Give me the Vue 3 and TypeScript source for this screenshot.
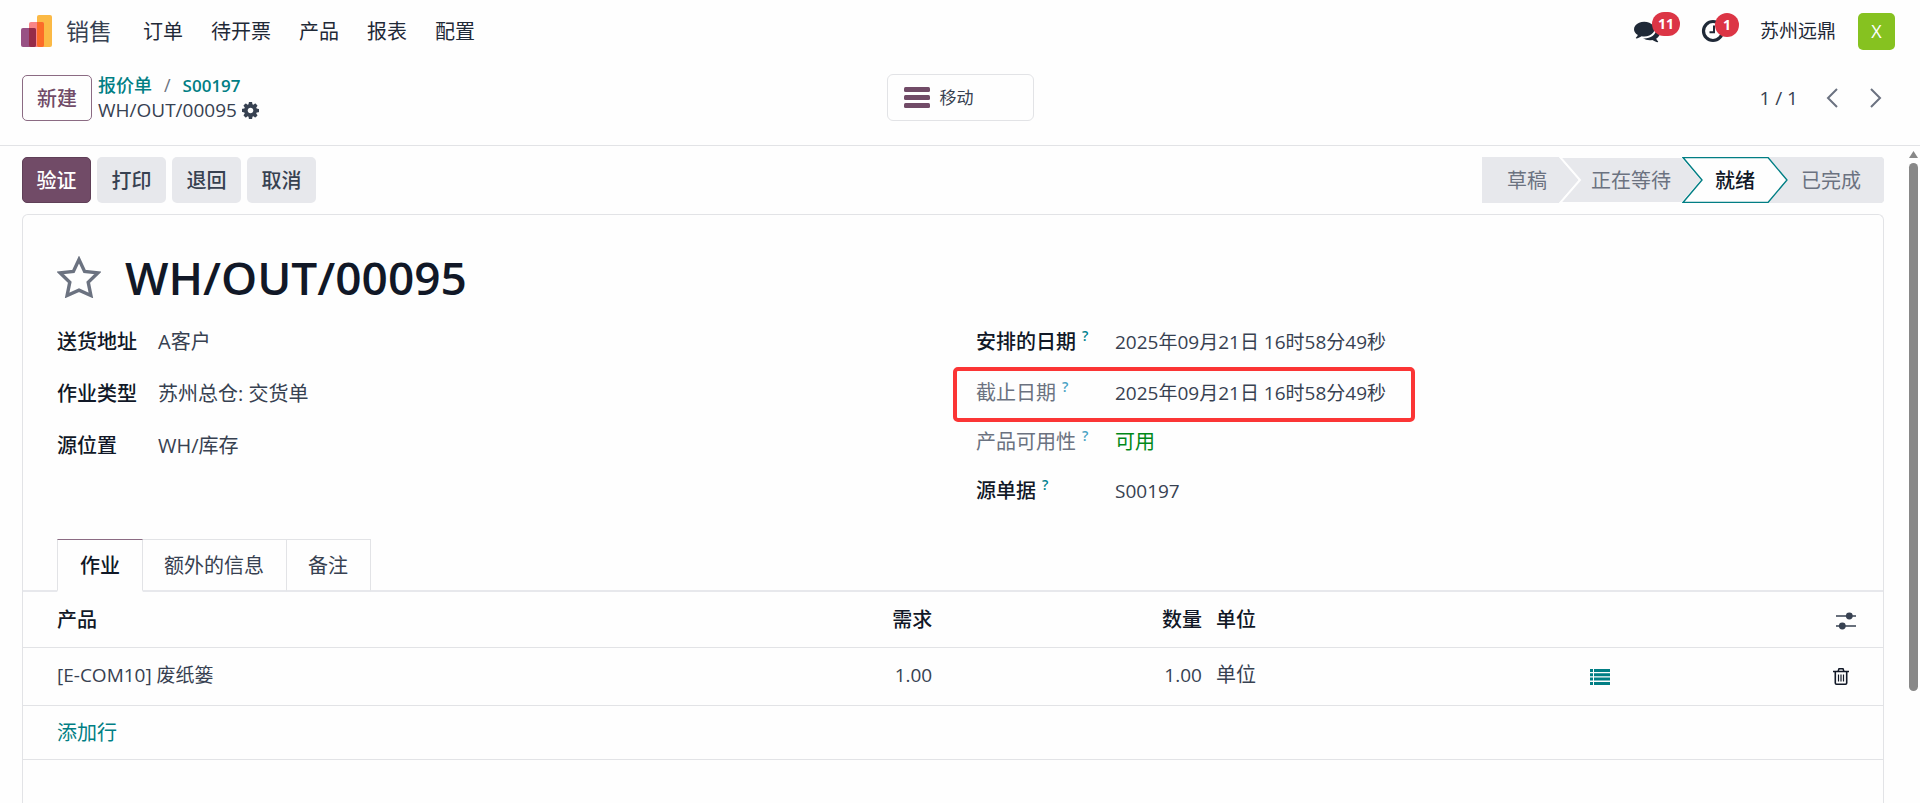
<script setup lang="ts">
import { ref } from 'vue'

interface Field {
  id: string
  label: string
  value: string
  help?: boolean
  muted?: boolean
  success?: boolean
  marked?: boolean
}

interface Stage {
  name: string
  kind: 'first' | 'middle' | 'current' | 'last'
  viewBox: string
  points: string
}

const menus = ['订单', '待开票', '产品', '报表', '配置']
const actions = ['验证', '打印', '退回', '取消']
const tabs = ['作业', '额外的信息', '备注']
const activeTab = ref(0)

const stages: Stage[] = [
  { name: '草稿', kind: 'first', viewBox: '0 0 97 46', points: '0,0 77,0 97,23 77,46 0,46' },
  { name: '正在等待', kind: 'middle', viewBox: '0 0 143 46', points: '1,0 123,0 143,23 123,46 1,46 21,23' },
  { name: '就绪', kind: 'current', viewBox: '0 0 106 46', points: '1,.5 86,.5 105,23 86,45.5 1,45.5 20,23' },
  { name: '已完成', kind: 'last', viewBox: '0 0 115 46', points: '0,0 113,0 115,2 115,44 113,46 0,46 20,23' },
]

const leftFields: Field[] = [
  { id: 'partner', label: '送货地址', value: 'A客户' },
  { id: 'type', label: '作业类型', value: '苏州总仓: 交货单' },
  { id: 'location', label: '源位置', value: 'WH/库存' },
]

const rightFields: Field[] = [
  { id: 'scheduled', label: '安排的日期', value: '2025年09月21日 16时58分49秒', help: true },
  { id: 'deadline', label: '截止日期', value: '2025年09月21日 16时58分49秒', help: true, muted: true, marked: true },
  { id: 'availability', label: '产品可用性', value: '可用', help: true, muted: true, success: true },
  { id: 'origin', label: '源单据', value: 'S00197', help: true },
]
</script>

<template>
  <div class="app">
    <header class="navbar">
      <a class="brand" href="#">
        <svg class="logo" viewBox="0 0 31 32" aria-hidden="true">
          <rect x="16" y="0" width="15" height="32" rx="2" fill="#fbb945" />
          <rect x="8" y="7" width="15" height="25" rx="2" fill="#f98587" />
          <path d="M16 7h5a2 2 0 0 1 2 2v21a2 2 0 0 1-2 2h-3a2 2 0 0 1-2-2z" fill="#fc6b28" />
          <rect x="0" y="13" width="15" height="19" rx="2" fill="#985184" />
          <path d="M8 13h5a2 2 0 0 1 2 2v15a2 2 0 0 1-2 2h-3a2 2 0 0 1-2-2z" fill="#962b48" />
        </svg>
        <span>销售</span>
      </a>
      <nav class="menus">
        <a v-for="menu in menus" :key="menu" href="#">{{ menu }}</a>
      </nav>
      <div class="systray">
        <button class="tray chat" type="button" aria-label="消息">
          <svg viewBox="0 0 1792 1792" width="26" height="26" fill="#1f2937">
            <path d="M1408 768q0 139-94 257t-256.5 186.5-353.5 68.5q-86 0-176-16-124 88-278 128-36 9-86 16h-3q-11 0-20.5-8t-11.5-21q-1-3-1-6.5t.5-6.5 2-6l2.5-5 3.5-5.5 4-5 4.5-5 4-4.5q5-6 23-25t26-29.5 22.5-29 25-38.5 20.5-44q-124-72-195-177t-71-224q0-139 94-257t256.5-186.5 353.5-68.5 353.5 68.5 256.5 186.5 94 257zm384 256q0 120-71 224.5t-195 176.5q10 24 20.5 44t25 38.5 22.5 29 26 29.5 23 25q1 1 4 4.5t4.5 5 4 5 3.5 5.5l2.5 5 2 6 .5 6.5-1 6.5q-3 14-13 22t-22 7q-50-7-86-16-154-40-278-128-90 16-176 16-271 0-472-132 58 4 88 4 161 0 309-45t264-129q125-92 192-212t67-254q0-77-23-152 129 71 204 178t75 230z" />
          </svg>
          <span class="badge">11</span>
        </button>
        <button class="tray clock" type="button" aria-label="活动">
          <svg viewBox="0 0 24 24" width="24" height="24" fill="none" stroke="#1f2937">
            <circle cx="12" cy="12" r="9.5" stroke-width="3.2" />
            <path d="M13 6.5v6.7H8.5" stroke-width="2" />
          </svg>
          <span class="badge">1</span>
        </button>
        <span class="company">苏州远鼎</span>
        <button class="avatar" type="button">X</button>
      </div>
    </header>

    <div class="control-panel">
      <div class="crumb-zone">
        <button class="new-button" type="button">新建</button>
        <div class="crumbs">
          <div class="crumb-path">
            <a href="#">报价单</a><span class="slash">/</span><a class="order" href="#">S00197</a>
          </div>
          <div class="crumb-current">
            <span>WH/OUT/00095</span>
            <button class="icon-button" type="button" aria-label="操作">
              <svg viewBox="128 128 1536 1536" width="17" height="17" fill="#374151">
                <path d="M1152 896q0-106-75-181t-181-75-181 75-75 181 75 181 181 75 181-75 75-181zm512-109v222q0 12-8 23t-20 13l-185 28q-19 54-39 91 35 50 107 138 10 12 10 25t-9 23q-27 37-99 108t-94 71q-12 0-26-9l-138-108q-44 23-91 38-16 136-29 186-7 28-36 28h-222q-14 0-24.5-8.5t-11.5-21.5l-28-184q-49-16-90-37l-141 107q-10 9-25 9-14 0-25-11-126-114-165-168-7-10-7-23 0-12 8-23 15-21 51-66.5t54-70.5q-27-50-41-99l-183-27q-13-2-21-12.5t-8-23.5v-222q0-12 8-23t19-13l186-28q14-46 39-92-40-57-107-138-10-12-10-24 0-10 9-23 26-36 98.5-107.5t94.5-71.5q13 0 26 10l138 107q44-23 91-38 16-136 29-186 7-28 36-28h222q14 0 24.5 8.5t11.5 21.5l28 184q49 16 90 37l142-107q9-9 24-9 13 0 25 10 129 119 165 170 7 8 7 22 0 12-8 23-15 21-51 66.5t-54 70.5q26 50 41 98l183 28q13 2 21 12.5t8 23.5z" />
              </svg>
            </button>
          </div>
        </div>
      </div>
      <button class="stat-button" type="button">
        <svg viewBox="0 0 26 22" width="26" height="22" fill="#714b67" aria-hidden="true">
          <rect width="26" height="5" rx="1.5" />
          <rect y="8" width="26" height="5" rx="1.5" />
          <rect y="16" width="26" height="5" rx="1.5" />
        </svg>
        <span>移动</span>
      </button>
      <div class="pager">
        <span>1 / 1</span>
        <button class="icon-button" type="button" aria-label="上一页">
          <svg viewBox="0 0 12 20" width="12" height="20"><path d="M11 1 2 10l9 9" fill="none" stroke="#6b7280" stroke-width="2" /></svg>
        </button>
        <button class="icon-button" type="button" aria-label="下一页">
          <svg viewBox="0 0 12 20" width="12" height="20"><path d="m1 1 9 9-9 9" fill="none" stroke="#6b7280" stroke-width="2" /></svg>
        </button>
      </div>
    </div>

    <main class="content">
      <div class="form-view">
        <div class="statusbar">
          <div class="actions">
            <button v-for="(action, i) in actions" :key="action" type="button" :class="['action', { primary: i === 0 }]">
              {{ action }}
            </button>
          </div>
          <div class="stages">
            <button v-for="stage in stages" :key="stage.name" type="button" :class="['stage', stage.kind]">
              <svg :viewBox="stage.viewBox" preserveAspectRatio="none" aria-hidden="true"><polygon :points="stage.points" /></svg>
              <span>{{ stage.name }}</span>
            </button>
          </div>
        </div>

        <section class="sheet">
          <div class="title-row">
            <button class="icon-button" type="button" aria-label="收藏">
              <svg viewBox="0 0 44 42" width="44" height="42">
                <path d="M22 3.5l5.6 12 13.2 1.4-9.6 9.3 2.7 13.3L22 34.2l-11.9 5.3 2.7-13.3-9.6-9.3 13.2-1.4z" fill="none" stroke="#6b7280" stroke-width="3.4" />
              </svg>
            </button>
            <h1>WH/OUT/00095</h1>
          </div>

          <div class="groups">
            <dl class="group left">
              <div v-for="field in leftFields" :key="field.id" class="field">
                <dt>{{ field.label }}</dt>
                <dd>{{ field.value }}</dd>
              </div>
            </dl>
            <dl class="group right">
              <div v-for="field in rightFields" :key="field.id" :class="['field', { muted: field.muted, marked: field.marked }]">
                <dt>{{ field.label }}<sup v-if="field.help">?</sup></dt>
                <dd :class="{ success: field.success }">{{ field.value }}</dd>
              </div>
            </dl>
          </div>

          <div class="tabs" role="tablist">
            <button
              v-for="(tab, i) in tabs"
              :key="tab"
              type="button"
              role="tab"
              :aria-selected="activeTab === i"
              :class="['tab', { active: activeTab === i }]"
              @click="activeTab = i"
            >
              {{ tab }}
            </button>
          </div>

          <table class="lines">
            <colgroup>
              <col />
              <col class="col-number" />
              <col class="col-number" />
              <col class="col-unit" />
              <col class="col-detail" />
              <col class="col-tools" />
            </colgroup>
            <thead>
              <tr>
                <th>产品</th>
                <th class="number">需求</th>
                <th class="number">数量</th>
                <th>单位</th>
                <th></th>
                <th class="tools">
                  <button class="icon-button" type="button" aria-label="可选列">
                    <svg viewBox="0 0 20 18" width="20" height="18" fill="#374151">
                      <path d="M0 3.2h20v1.6H0zM0 13.2h20v1.6H0z" />
                      <circle cx="13.3" cy="4" r="3.4" />
                      <circle cx="6.3" cy="14" r="3.4" />
                    </svg>
                  </button>
                </th>
              </tr>
            </thead>
            <tbody>
              <tr class="product-row">
                <td>[E-COM10] 废纸篓</td>
                <td class="number">1.00</td>
                <td class="number">1.00</td>
                <td>单位</td>
                <td>
                  <button class="icon-button" type="button" aria-label="详细作业">
                    <svg viewBox="0 0 20 16" width="20" height="16" fill="#017e84">
                      <path d="M0 0h3v3H0zM0 4.3h3v3H0zM0 8.6h3v3H0zM0 13h3v3H0zM4 0h16v3H4zM4 4.3h16v3H4zM4 8.6h16v3H4zM4 13h16v3H4z" />
                    </svg>
                  </button>
                </td>
                <td class="bin">
                  <button class="icon-button" type="button" aria-label="删除">
                    <svg viewBox="0 0 16 17" width="16" height="17" fill="none" stroke="#111827">
                      <path d="M0 3.6h16M5 3.5l1-2.7h4l1 2.7" stroke-width="1.5" />
                      <path d="M2.3 4v11q0 1.2 1.2 1.2h9q1.2 0 1.2-1.2V4" stroke-width="1.6" />
                      <path d="M5.5 6.5v7M8 6.5v7M10.5 6.5v7" stroke-width="1.2" />
                    </svg>
                  </button>
                </td>
              </tr>
              <tr class="add-row">
                <td colspan="6"><a href="#">添加行</a></td>
              </tr>
            </tbody>
          </table>
        </section>
      </div>
      <div class="scrollbar" aria-hidden="true">
        <svg viewBox="0 0 9 7" width="9" height="7"><path d="M4.5 0 9 7H0z" fill="#888" /></svg>
        <div class="thumb"></div>
      </div>
    </main>
  </div>
</template>

<style>
body {
  background: #fefefe;
}
</style>

<style scoped>
.app {
  display: flex;
  flex-direction: column;
  height: 100vh;
  overflow: hidden;
  color: #374151;
  font-family: "Open Sans", "Noto Sans CJK SC", sans-serif;
  font-size: 20px;
  line-height: 28px;
}

.app *,
.app *::after {
  box-sizing: border-box;
}

button {
  font: inherit;
  color: inherit;
  padding: 0;
  margin: 0;
  border: 0;
  background: none;
}

a {
  color: inherit;
  text-decoration: none;
}

svg {
  display: block;
}

.icon-button {
  display: inline-flex;
}

.navbar {
  flex: none;
  display: flex;
  align-items: center;
  height: 62px;
  padding: 0 25px 0 21px;
  color: #1f2937;
}

.brand {
  display: flex;
  align-items: center;
  gap: 14px;
  font-size: 23px;
  color: #374151;
}

.logo {
  width: 31px;
  height: 32px;
}

.menus {
  display: flex;
  gap: 28px;
  margin-left: 31px;
  padding-top: 2px;
}

.systray {
  display: flex;
  align-items: center;
  margin-left: auto;
}

.tray {
  position: relative;
}

.chat {
  margin-right: 41px;
}

.clock {
  margin-right: 35px;
}

.badge {
  position: absolute;
  left: 18px;
  top: -6px;
  min-width: 24px;
  padding: 0 6px;
  border-radius: 12px;
  background: #dc3545;
  color: #fff;
  font-size: 14px;
  font-weight: 700;
  line-height: 24px;
}

.clock .badge {
  left: 14px;
}

.company {
  font-size: 19px;
  margin-right: 22px;
}

.avatar {
  width: 37px;
  height: 37px;
  border-radius: 5px;
  background: #86c220;
  color: #fff;
  font-size: 18px;
}

.control-panel {
  flex: none;
  display: grid;
  grid-template-columns: 1fr auto 1fr;
  align-items: center;
  height: 84px;
  padding: 0 22px 12px;
  border-bottom: 1px solid #e2e3e6;
}

.crumb-zone {
  display: flex;
  align-items: center;
  gap: 6px;
}

.new-button {
  width: 70px;
  height: 46px;
  padding-top: 2px;
  border: 1px solid #8b6b83;
  border-radius: 5px;
  color: #714b67;
  font-weight: 500;
}

.crumbs {
  line-height: 24px;
}

.crumb-path {
  font-size: 18px;
  font-weight: 500;
  color: #017e84;
}

.crumb-path .order {
  font-size: 17px;
  font-weight: 600;
}

.slash {
  margin: 0 12px;
  font-weight: 400;
  color: #6b7280;
}

.crumb-current {
  display: flex;
  align-items: center;
  gap: 5px;
  font-size: 19px;
}

.stat-button {
  display: flex;
  align-items: center;
  gap: 10px;
  width: 147px;
  height: 47px;
  padding: 0 16px;
  border: 1px solid #e2e3e6;
  border-radius: 6px;
  font-size: 17px;
}

.pager {
  display: flex;
  align-items: center;
  justify-content: flex-end;
  padding-right: 16px;
  font-size: 19px;
}

.pager .icon-button {
  margin-left: 32px;
}

.pager span + .icon-button {
  margin-left: 28px;
}

.content {
  flex: 1;
  display: flex;
  min-height: 0;
}

.form-view {
  flex: 1;
  display: flex;
  flex-direction: column;
  min-width: 0;
  padding: 11px 23px 0 22px;
}

.statusbar {
  flex: none;
  display: flex;
  justify-content: space-between;
}

.actions {
  display: flex;
  gap: 6px;
}

.action {
  width: 69px;
  height: 46px;
  padding-top: 2px;
  border-radius: 5px;
  background: #e7e8ec;
  font-weight: 500;
}

.action.primary {
  border: 1px solid #5f3f57;
  background: #714b67;
  color: #fff;
}

.stages {
  display: flex;
}

.stage {
  position: relative;
  height: 46px;
  padding: 2px 31px 0 32px;
  color: #6b7280;
}

.stage + .stage {
  margin-left: -20px;
}

.stage svg {
  position: absolute;
  inset: 0;
  width: 100%;
  height: 100%;
  fill: #e7e8ec;
}

.stage span {
  position: relative;
}

.stage.first {
  padding: 2px 32px 0 25px;
}

.stage.middle svg {
  stroke: #fefefe;
  stroke-width: 2;
}

.stage.current {
  z-index: 1;
  padding: 2px 33px 0;
  color: #111827;
  font-weight: 500;
}

.stage.current svg {
  fill: #fefefe;
  stroke: #017e84;
  stroke-width: 1.4;
}

.stage.last {
  padding: 2px 23px 0 33px;
}

.sheet {
  flex: 1;
  margin-top: 11px;
  border: 1px solid #e2e3e6;
  border-bottom: 0;
  border-radius: 6px 6px 0 0;
}

.title-row {
  display: flex;
  align-items: center;
  gap: 24px;
  height: 64px;
  margin: 30px 34px 7px;
}

h1 {
  margin: 0;
  color: #111827;
  font-size: 46px;
  font-weight: 600;
  line-height: 64px;
}

.groups {
  display: grid;
  grid-template-columns: 1fr 1fr;
  gap: 46px;
  margin: 0 34px;
}

.group {
  margin: 0;
}

.field {
  position: relative;
  display: grid;
  grid-template-columns: 101px 1fr;
  align-items: center;
  height: 52px;
}

.right .field {
  grid-template-columns: 139px 1fr;
  height: 49px;
}

.right .field:first-child {
  height: 52px;
}

dt {
  color: #111827;
  font-weight: 500;
}

.muted dt {
  color: #6b7280;
  font-weight: 400;
}

dd {
  margin: 0;
}

.right dd {
  font-size: 19px;
}

.right dd.success {
  color: #008818;
  font-size: 20px;
}

sup {
  margin-left: 6px;
  color: #01828f;
  font-size: 14px;
  font-weight: 600;
  line-height: 0;
}

.muted sup {
  color: #4aa3c4;
}

.marked::after {
  content: "";
  position: absolute;
  left: -23px;
  top: -1px;
  width: 462px;
  height: 55px;
  border: 4px solid #fb3535;
  border-radius: 5px;
}

.tabs {
  display: flex;
  margin-top: 24px;
  padding-left: 34px;
  border-bottom: 2px solid #e7e8ec;
}

.tab {
  height: 53px;
  margin-bottom: -2px;
  padding: 2px 22px 0 21px;
  border: 1px solid #e2e3e6;
  border-left: 0;
  border-bottom: 2px solid #e7e8ec;
}

.tab.active {
  padding-left: 22px;
  border-left: 1px solid #e2e3e6;
  border-top-color: #8b6b83;
  border-bottom-color: #fefefe;
  color: #111827;
  font-weight: 500;
}

.lines {
  width: 100%;
  border-collapse: collapse;
  table-layout: fixed;
}

.col-number {
  width: 14.5%;
}

.col-unit {
  width: 20.1%;
}

.col-detail {
  width: 12.7%;
}

.col-tools {
  width: 64px;
}

th,
td {
  height: 55px;
  padding: 0 7px;
  border-bottom: 1px solid #e2e3e6;
  text-align: left;
  vertical-align: middle;
}

th {
  padding-top: 2px;
  color: #111827;
  font-weight: 500;
}

th:first-child,
td:first-child {
  padding-left: 34px;
}

.product-row td {
  height: 58px;
  padding-bottom: 2px;
}

.product-row td:first-child {
  font-size: 19px;
}

th.number,
td.number {
  text-align: right;
}

td.number {
  font-size: 19px;
}

.lines .icon-button {
  vertical-align: middle;
}

.lines .tools {
  padding: 0 0 0 17px;
}

.lines .bin {
  padding: 0 0 2px 14px;
}

.add-row td {
  height: 54px;
  padding-top: 2px;
}

.add-row a {
  color: #017e84;
}

.scrollbar {
  flex: none;
  display: flex;
  flex-direction: column;
  align-items: center;
  gap: 5px;
  width: 13px;
  padding-top: 5px;
}

.thumb {
  width: 9px;
  height: 81%;
  border-radius: 5px;
  background: #888;
}
</style>
